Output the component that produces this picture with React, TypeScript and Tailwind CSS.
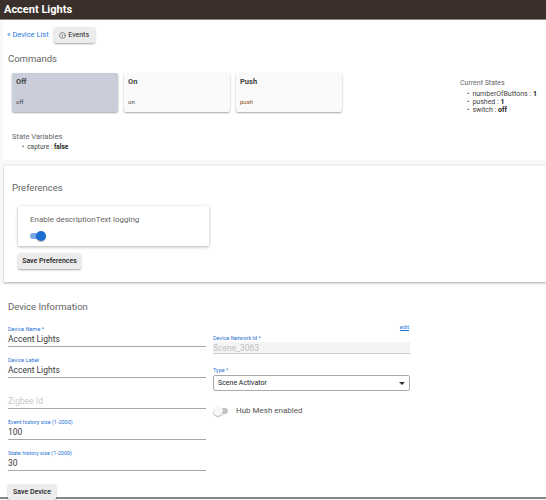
import { Info } from "lucide-react";

function CommandCard({ title, sub, active }: { title: string; sub: string; active?: boolean }) {
  return (
    <div
      className={`w-[106px] h-[39px] flex flex-col justify-between px-[4px] pt-[4px] pb-[6px] rounded-[2px] shadow-[0_1px_2px_rgba(0,0,0,0.35)] ${
        active ? "bg-[#c9ceda]" : "bg-[#fafafa]"
      }`}
    >
      <span className="text-[7.5px] font-bold text-[#444] leading-[10px]">{title}</span>
      <span className={`text-[6px] leading-[8px] ${sub === "push" ? "text-[#8a4b16]" : "text-[#444]"}`}>{sub}</span>
    </div>
  );
}

function Field({ label, value, placeholder }: { label?: string; value?: string; placeholder?: string }) {
  return (
    <div className="h-[31px] flex flex-col justify-end border-b border-[#a8a8a8]">
      {label && <span className="text-[5.5px] leading-[8px] text-[#2a72d4]">{label}</span>}
      {value ? (
        <span className="text-[8.5px] leading-[12px] text-[#3a3a3a] pb-[1px]">{value}</span>
      ) : (
        <span className="text-[8.5px] leading-[12px] text-[#c8c8c8] pb-[1px]">{placeholder}</span>
      )}
    </div>
  );
}

function Toggle({ on }: { on?: boolean }) {
  return (
    <div className="relative w-[16px] h-[10px] flex items-center">
      <div className={`w-[15px] h-[6px] rounded-full ${on ? "bg-[#79a9e4]" : "bg-[#c4c4c4]"}`} />
      <div
        className={`absolute top-0 w-[10px] h-[10px] rounded-full shadow-[0_1px_1px_rgba(0,0,0,0.3)] ${
          on ? "right-0 bg-[#1a6fd0]" : "left-0 bg-[#f7f7f7]"
        }`}
      />
    </div>
  );
}

function GrayButton({ children, className = "" }: { children: React.ReactNode; className?: string }) {
  return (
    <div
      className={`inline-flex items-center justify-center h-[16px] bg-[#ececec] rounded-[2px] shadow-[0_1px_2px_rgba(0,0,0,0.35)] text-[7px] font-medium text-[#222] ${className}`}
    >
      {children}
    </div>
  );
}

export default function App() {
  return (
    <div className="w-[546px] h-[500px] overflow-hidden bg-[#f8f8f8] font-['Roboto',sans-serif]">
      {/* Title bar */}
      <header className="h-[20px] bg-[#3b2f2b] px-[4px] text-white font-bold text-[11px] leading-[20px] border-b border-[#8a8280]">
        Accent Lights
      </header>

      {/* Commands panel */}
      <section className="ml-[3px] h-[140px] bg-white pt-[7px]">
        <div className="flex items-center pl-[4px] gap-[5px]">
          <span className="text-[7.5px] text-[#1e7be0]">« Device List</span>
          <GrayButton className="w-[41px] gap-[2px] font-normal text-[7.5px]">
            <Info size={7} strokeWidth={1.6} />
            Events
          </GrayButton>
        </div>

        <h2 className="mt-[10px] pl-[5px] text-[9.5px] leading-[12px] text-[#666]">Commands</h2>

        <div className="mt-[8px] flex">
          <div className="flex gap-[6px] pl-[9px]">
            <CommandCard title="Off" sub="off" active />
            <CommandCard title="On" sub="on" />
            <CommandCard title="Push" sub="push" />
          </div>
          <div className="ml-auto w-[86px] mt-[6px] text-[7px] text-[#666] leading-[9px]">
            <div>Current States</div>
            <ul className="mt-[2px] pl-[7px] text-[#444]">
              <li className="flex gap-[3px] leading-[8px]">
                <span>•</span>
                <span>
                  numberOfButtons : <b className="text-[#222]">1</b>
                </span>
              </li>
              <li className="flex gap-[3px] leading-[8px]">
                <span>•</span>
                <span>
                  pushed : <b className="text-[#222]">1</b>
                </span>
              </li>
              <li className="flex gap-[3px] leading-[8px]">
                <span>•</span>
                <span>
                  switch : <b className="text-[#222]">off</b>
                </span>
              </li>
            </ul>
          </div>
        </div>

        <div className="mt-[18px] pl-[9px] text-[7.5px] leading-[9px] text-[#666]">State Variables</div>
        <div className="mt-[2px] pl-[19px] flex gap-[3px] text-[6.5px] leading-[9px] text-[#444]">
          <span>•</span>
          <span>
            capture : <b className="text-[#222]">false</b>
          </span>
        </div>
      </section>

      {/* Preferences card */}
      <section className="mt-[5px] ml-[4px] h-[117px] bg-white border-t border-[#eee] shadow-[0_1px_2px_rgba(0,0,0,0.3)] pt-[16px] px-[8px]">
        <h2 className="text-[9.5px] leading-[12px] text-[#666]">Preferences</h2>
        <div className="mt-[12px] ml-[6px] w-[191px] h-[40px] bg-white shadow-[0_1px_3px_rgba(0,0,0,0.3)] px-[12px] pt-[9px]">
          <div className="text-[8px] leading-[10px] text-[#666]">Enable descriptionText logging</div>
          <div className="mt-[6px]">
            <Toggle on />
          </div>
        </div>
        <GrayButton className="mt-[7px] ml-[6px] w-[63px]">Save Preferences</GrayButton>
      </section>

      {/* Device information */}
      <section className="mt-[3px] h-[214px] bg-white pt-[16px] border-b-[2px] border-[#888]">
        <h2 className="pl-[8px] text-[9.5px] leading-[12px] text-[#666]">Device Information</h2>
        <div className="mt-[3px] flex gap-[7px] pl-[8px]">
          <div className="w-[198px]">
            <Field label="Device Name *" value="Accent Lights" />
            <Field label="Device Label" value="Accent Lights" />
            <Field placeholder="Zigbee Id" />
            <Field label="Event history size (1-2000)" value="100" />
            <Field label="State history size (1-2000)" value="30" />
            <GrayButton className="mt-[13px] w-[48px]">Save Device</GrayButton>
          </div>
          <div className="w-[197px]">
            <div className="h-[15px] flex justify-end items-end">
              <span className="text-[5.5px] text-[#2a72d4] underline mr-[1px]">edit</span>
            </div>
            <div className="mt-[3px] text-[5.5px] leading-[8px] text-[#2a72d4]">Device Network Id *</div>
            <div className="h-[12px] bg-[#f4f4f4] border-b border-[#ccc] text-[8.5px] leading-[12px] text-[#c0c0c0]">
              Scene_3063
            </div>
            <div className="mt-[13px] text-[5.5px] leading-[7px] text-[#2a72d4]">Type *</div>
            <div className="mt-[1px] h-[16px] border border-[#aaa] rounded-[2px] flex items-center justify-between pl-[4px] pr-[4px] text-[7px] text-[#222]">
              <span>Scene Activator</span>
              <span className="w-0 h-0 border-l-[3px] border-r-[3px] border-t-[3px] border-l-transparent border-r-transparent border-t-[#333]" />
            </div>
            <div className="mt-[14px] flex items-center gap-[7px]">
              <Toggle />
              <span className="text-[8px] text-[#555]">Hub Mesh enabled</span>
            </div>
          </div>
        </div>
      </section>
    </div>
  );
}
